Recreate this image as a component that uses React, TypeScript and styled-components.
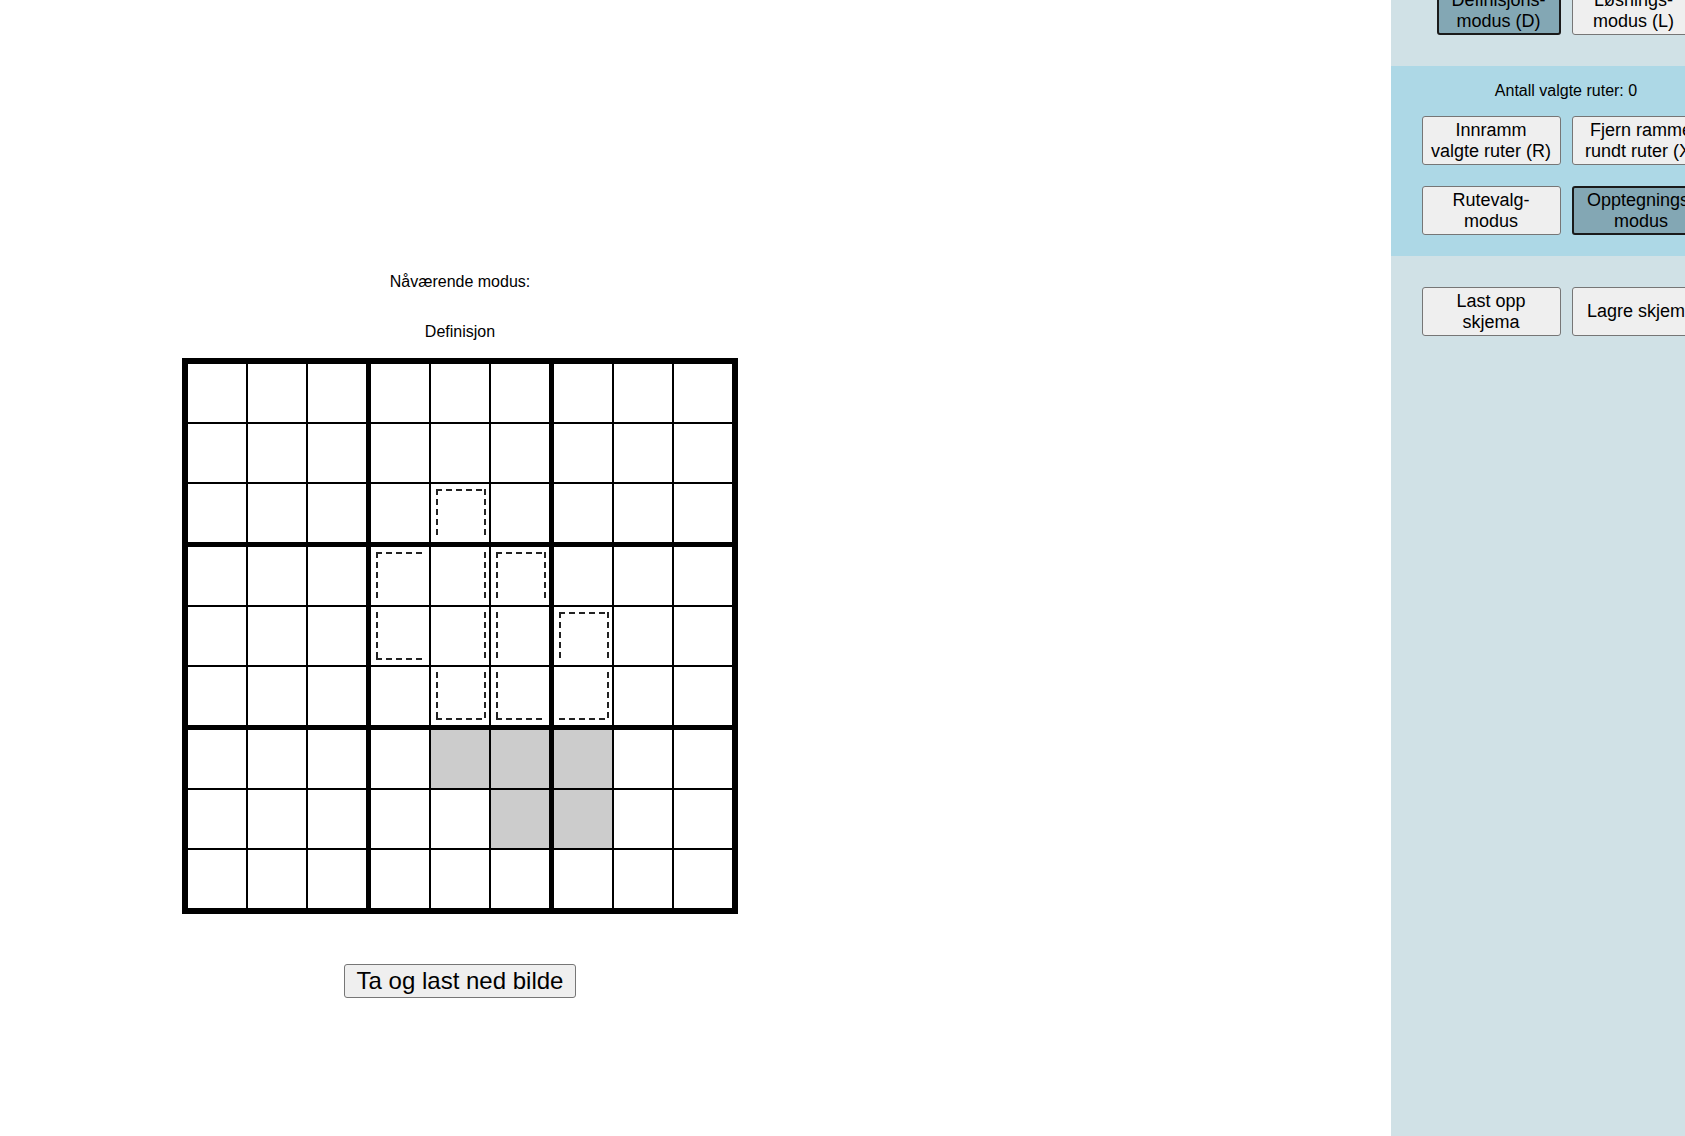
import React from "react";
import styled, { createGlobalStyle } from "styled-components";

const GlobalStyle = createGlobalStyle`
  html, body {
    margin: 0;
    padding: 0;
    overflow: hidden;
    background: #ffffff;
    font-family: "Liberation Sans", Arial, sans-serif;
    color: #000;
  }
`;

const Page = styled.div`
  display: flex;
  align-items: stretch;
  width: 1741px;
  height: 100vh;
`;

const Main = styled.main`
  flex: 0 0 1391px;
  display: flex;
  justify-content: flex-start;
`;

const Column = styled.div`
  width: 920px;
  padding-top: 273px;
  display: flex;
  flex-direction: column;
  align-items: center;
`;

const Caption = styled.p<{ $gap?: number }>`
  margin: ${(p) => p.$gap ?? 0}px 0 0;
  font-size: 16px;
  line-height: 18px;
`;

const Board = styled.div`
  margin-top: 17px;
  display: grid;
  grid-template-columns: repeat(9, auto);
  border: 3px solid #000;
  background: #fff;
`;

const Cell = styled.div<{ $row: number; $col: number; $shaded: boolean }>`
  position: relative;
  width: 58px;
  height: 58px;
  background: ${(p) => (p.$shaded ? "#cccccc" : "#ffffff")};
  border-style: solid;
  border-color: #000;
  border-left-width: ${(p) => (p.$col % 3 === 0 ? 3 : 1)}px;
  border-right-width: ${(p) => (p.$col === 8 ? 3 : p.$col % 3 === 2 ? 2 : 1)}px;
  border-top-width: ${(p) => (p.$row % 3 === 0 ? 3 : 1)}px;
  border-bottom-width: ${(p) => (p.$row === 8 ? 3 : p.$row % 3 === 2 ? 2 : 1)}px;
`;

const DASH = "#222";
const hDash = `repeating-linear-gradient(to right, ${DASH} 0 6px, transparent 6px 10px)`;
const vDash = `repeating-linear-gradient(to bottom, ${DASH} 0 6px, transparent 6px 10px)`;

const cageBackground = (p: { $t: boolean; $r: boolean; $b: boolean; $l: boolean }) => {
  const layers: string[] = [];
  if (p.$t) layers.push(`${hDash} left top / 100% 2px no-repeat`);
  if (p.$b) layers.push(`${hDash} left bottom / 100% 2px no-repeat`);
  if (p.$l) layers.push(`${vDash} left top / 2px 100% no-repeat`);
  if (p.$r) layers.push(`${vDash} right top / 2px 100% no-repeat`);
  return layers.join(", ") || "none";
};

const CageEdge = styled.div<{ $t: boolean; $r: boolean; $b: boolean; $l: boolean }>`
  position: absolute;
  top: 5px;
  left: 5px;
  right: 3px;
  bottom: 5px;
  pointer-events: none;
  background: ${cageBackground};
`;

const SnapButton = styled.button`
  margin-top: 50px;
  font-family: "Liberation Sans", Arial, sans-serif;
  font-size: 24px;
  line-height: 28px;
  padding: 2px 12px;
  background: #efefef;
  color: #000;
  border: 1px solid #767676;
  border-radius: 3px;
`;

const Sidebar = styled.aside`
  flex: 0 0 350px;
  height: 100vh;
  background: #d0e1e6;
  overflow: hidden;
`;

const SidebarStack = styled.div`
  margin-top: -45px;
  display: flex;
  flex-direction: column;
`;

const Section = styled.section<{ $highlight?: boolean }>`
  background: ${(p) => (p.$highlight ? "#add8e6" : "transparent")};
  padding: ${(p) => (p.$highlight ? "16px 30px 21px" : "31px 30px")};
  display: flex;
  flex-direction: column;
  align-items: center;
`;

const Counter = styled.p`
  margin: 0 0 16px;
  font-size: 16px;
  line-height: 18px;
`;

const ButtonGrid = styled.div`
  display: grid;
  grid-template-columns: 139px 139px;
  column-gap: 11px;
  row-gap: 21px;
`;

const ModeRow = styled.div`
  display: flex;
  justify-content: center;
  gap: 11px;
`;

const ToolButton = styled.button<{ $active?: boolean; $w?: number }>`
  width: ${(p) => p.$w ?? 139}px;
  height: 49px;
  font-family: "Liberation Sans", Arial, sans-serif;
  font-size: 18px;
  line-height: 20.5px;
  color: #000;
  text-align: center;
  background: ${(p) => (p.$active ? "#83a7b4" : "#efefef")};
  border: ${(p) => (p.$active ? "2px solid #1a1a1a" : "1px solid #767676")};
  border-radius: 3px;
  padding: 0 2px;
  white-space: nowrap;
`;

type Edges = { t?: boolean; r?: boolean; b?: boolean; l?: boolean };

const cages: Record<string, Edges> = {
  "2-4": { t: true, l: true, r: true },
  "3-3": { t: true, l: true },
  "3-4": { r: true },
  "3-5": { t: true, l: true, r: true },
  "4-3": { l: true, b: true },
  "4-4": { r: true },
  "4-5": { l: true },
  "4-6": { t: true, l: true, r: true },
  "5-4": { l: true, r: true, b: true },
  "5-5": { l: true, b: true },
  "5-6": { r: true, b: true },
};

const shaded = new Set(["6-4", "6-5", "6-6", "7-5", "7-6"]);

export default function App() {
  const cells = [];
  for (let r = 0; r < 9; r++) {
    for (let c = 0; c < 9; c++) {
      const key = `${r}-${c}`;
      const cage = cages[key];
      cells.push(
        <Cell key={key} $row={r} $col={c} $shaded={shaded.has(key)}>
          {cage && (
            <CageEdge $t={!!cage.t} $r={!!cage.r} $b={!!cage.b} $l={!!cage.l} />
          )}
        </Cell>
      );
    }
  }

  return (
    <>
      <GlobalStyle />
      <Page>
        <Main>
          <Column>
            <Caption>Nåværende modus:</Caption>
            <Caption $gap={32}>Definisjon</Caption>
            <Board>{cells}</Board>
            <SnapButton>Ta og last ned bilde</SnapButton>
          </Column>
        </Main>
        <Sidebar>
          <SidebarStack>
            <Section>
              <ModeRow>
                <ToolButton $active $w={124}>
                  Definisjons-
                  <br />
                  modus (D)
                </ToolButton>
                <ToolButton $w={124}>
                  Løsnings-
                  <br />
                  modus (L)
                </ToolButton>
              </ModeRow>
            </Section>
            <Section $highlight>
              <Counter>Antall valgte ruter: 0</Counter>
              <ButtonGrid>
                <ToolButton>
                  Innramm
                  <br />
                  valgte ruter (R)
                </ToolButton>
                <ToolButton>
                  Fjern ramme
                  <br />
                  rundt ruter (X)
                </ToolButton>
                <ToolButton>
                  Rutevalg-
                  <br />
                  modus
                </ToolButton>
                <ToolButton $active>
                  Opptegnings-
                  <br />
                  modus
                </ToolButton>
              </ButtonGrid>
            </Section>
            <Section>
              <ButtonGrid>
                <ToolButton>
                  Last opp
                  <br />
                  skjema
                </ToolButton>
                <ToolButton>Lagre skjema</ToolButton>
              </ButtonGrid>
            </Section>
          </SidebarStack>
        </Sidebar>
      </Page>
    </>
  );
}
